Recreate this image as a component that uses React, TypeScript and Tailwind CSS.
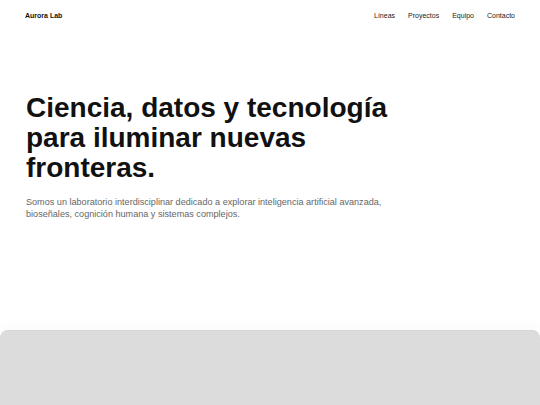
export default function App() {
  const links = ['Líneas', 'Proyectos', 'Equipo', 'Contacto']
  return (
    <div className="h-screen bg-white font-['Liberation_Sans',Arial,sans-serif] overflow-hidden">
      {/* Header */}
      <header className="flex items-center justify-between px-[25px] h-[32px]">
        <span className="text-[7px] font-bold text-[#111]">Aurora Lab</span>
        <nav className="flex gap-[13px] text-[7px] text-[#222]">
          {links.map((l) => (
            <a key={l} href="#" className="hover:text-black">
              {l}
            </a>
          ))}
        </nav>
      </header>

      {/* Hero */}
      <section className="px-[26px] pt-[61px] h-[298px]">
        <h1 className="text-[28px] leading-[30px] font-bold text-[#111] max-w-[380px]">
          Ciencia, datos y tecnología para iluminar nuevas fronteras.
        </h1>
        <p className="mt-[13px] text-[9.1px] leading-[12px] text-[#666] max-w-[370px]">
          Somos un laboratorio interdisciplinar dedicado a explorar inteligencia artificial avanzada,
          bioseñales, cognición humana y sistemas complejos.
        </p>
      </section>

      {/* Media panel */}
      <div className="h-[200px] rounded-t-[8px] bg-[#dcdcdc] border-t border-[#d6d6d6] shadow-[0_-6px_14px_rgba(0,0,0,0.02)]" />
    </div>
  )
}
